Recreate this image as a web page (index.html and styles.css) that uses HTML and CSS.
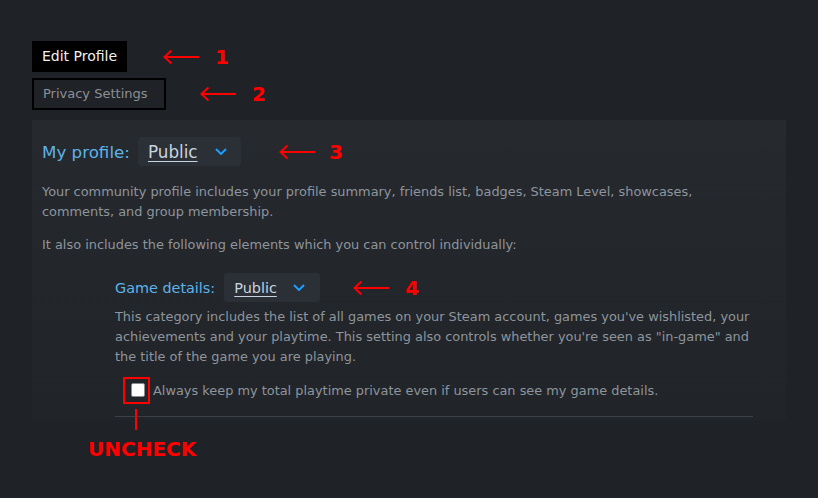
FILE: index.html
```html
<!DOCTYPE html>
<html lang="en">
<head>
<meta charset="utf-8">
<title>Privacy Settings</title>
<link rel="stylesheet" href="styles.css">
</head>
<body>
<div class="page">
  <div class="nav-row">
    <div class="tab tab-active">Edit Profile</div>
    <div class="annot annot-1">
      <svg class="arrow" width="36" height="16" viewBox="0 0 36 16"><path d="M1.5 8 H36 M8.5 1.5 L1.5 8 L8.5 14.5" fill="none" stroke="#ff0000" stroke-width="2"/></svg>
      <span class="num">1</span>
    </div>
  </div>
  <div class="nav-row nav-row-2">
    <div class="tab tab-outline">Privacy Settings</div>
    <div class="annot annot-2">
      <svg class="arrow" width="36" height="16" viewBox="0 0 36 16"><path d="M1.5 8 H36 M8.5 1.5 L1.5 8 L8.5 14.5" fill="none" stroke="#ff0000" stroke-width="2"/></svg>
      <span class="num">2</span>
    </div>
  </div>

  <div class="panel">
    <div class="setting-row">
      <span class="label label-lg">My profile:</span>
      <div class="dropdown dropdown-lg">
        <span class="dd-value">Public</span>
        <svg class="chev" width="12" height="7" viewBox="0 0 12 7"><path d="M1 1 L6 6 L11 1" fill="none" stroke="#1a9fff" stroke-width="2"/></svg>
      </div>
      <div class="annot annot-3">
        <svg class="arrow" width="36" height="16" viewBox="0 0 36 16"><path d="M1.5 8 H36 M8.5 1.5 L1.5 8 L8.5 14.5" fill="none" stroke="#ff0000" stroke-width="2"/></svg>
        <span class="num num-3">3</span>
      </div>
    </div>
    <p class="desc desc-1">Your community profile includes your profile summary, friends list, badges, Steam Level, showcases, comments, and group membership.</p>
    <p class="desc desc-2">It also includes the following elements which you can control individually:</p>

    <div class="sub">
      <div class="setting-row">
        <span class="label label-sm">Game details:</span>
        <div class="dropdown dropdown-sm">
          <span class="dd-value dd-value-sm">Public</span>
          <svg class="chev" width="12" height="7" viewBox="0 0 12 7"><path d="M1 1 L6 6 L11 1" fill="none" stroke="#1a9fff" stroke-width="2"/></svg>
        </div>
        <div class="annot annot-4">
          <svg class="arrow" width="36" height="16" viewBox="0 0 36 16"><path d="M1.5 8 H36 M8.5 1.5 L1.5 8 L8.5 14.5" fill="none" stroke="#ff0000" stroke-width="2"/></svg>
          <span class="num">4</span>
        </div>
      </div>
      <p class="desc desc-3">This category includes the list of all games on your Steam account, games you've wishlisted, your achievements and your playtime. This setting also controls whether you're seen as "in-game" and the title of the game you are playing.</p>
      <div class="check-row">
        <div class="highlight">
          <span class="checkbox"></span>
          <span class="pointer-line"></span>
          <span class="pointer-text">UNCHECK</span>
        </div>
        <span class="check-label">Always keep my total playtime private even if users can see my game details.</span>
      </div>
    </div>
  </div>
</div>
</body>
</html>
```

FILE: styles.css
```css
html, body {
  margin: 0;
  padding: 0;
}
body {
  background: #1f2226;
  font-family: "DejaVu Sans", "Liberation Sans", sans-serif;
  width: 818px;
  height: 498px;
  overflow: hidden;
}
.page {
  padding: 41px 32px 0 32px;
}
.nav-row {
  display: flex;
  align-items: center;
}
.nav-row-2 {
  margin-top: 6px;
}
.tab {
  box-sizing: border-box;
  white-space: nowrap;
}
.tab-active {
  background: #000000;
  color: #f0f0f0;
  font-size: 14px;
  line-height: 17px;
  height: 31px;
  padding: 7px 0 0 10px;
  width: 95px;
}
.tab-outline {
  border: 2px solid #000000;
  color: #8c9096;
  font-size: 13px;
  line-height: 16px;
  height: 32px;
  padding: 6px 9px 0 9px;
  width: 134px;
}
.annot {
  display: flex;
  align-items: center;
}
.annot-1 { margin-left: 36px; }
.annot-2 { margin-left: 34px; }
.annot-3 { margin-left: 38px; }
.annot-4 { margin-left: 33px; }
.arrow {
  display: block;
}
.num {
  color: #ff0000;
  font-weight: bold;
  font-size: 20px;
  line-height: 20px;
  margin-left: 16px;
}
.num-3 {
  margin-left: 14px;
}
.panel {
  margin-top: 10px;
  width: 754px;
  box-sizing: border-box;
  height: 300px;
  padding: 17px 24px 0 10px;
  background: linear-gradient(180deg, #262a2f 0%, #23262b 50%, #212428 100%);
}
.setting-row {
  display: flex;
  align-items: center;
  height: 29px;
}
.label {
  color: #5eb2ea;
}
.label-lg {
  font-size: 16.7px;
  margin-right: 8px;
}
.label-sm {
  font-size: 14.4px;
  margin-right: 9px;
}
.dropdown {
  box-sizing: border-box;
  height: 29px;
  display: flex;
  align-items: center;
  background: #2b2f36;
  border-radius: 3px;
}
.dropdown-lg {
  width: 103px;
  padding-left: 10px;
}
.dropdown-sm {
  width: 96px;
  padding-left: 10px;
}
.dd-value {
  color: #c7d3de;
  font-size: 16.8px;
  text-decoration: underline;
  text-decoration-thickness: 1px;
  text-underline-offset: 3px;
  margin-right: 17px;
}
.dd-value-sm {
  font-size: 14.4px;
  margin-right: 16px;
}
.chev {
  display: block;
}
.desc {
  margin: 0;
  color: #8e959d;
  font-size: 12.9px;
  line-height: 20px;
}
.desc-1 {
  margin-top: 16px;
}
.desc-2 {
  margin-top: 13px;
}
.sub {
  margin: 18px 9px 0 73px;
  border-bottom: 1px solid #3b4049;
  padding-bottom: 12px;
}
.desc-3 {
  margin-top: 5px;
  margin-right: -4px;
}
.check-row {
  display: flex;
  align-items: center;
  margin-top: 10px;
  margin-left: 8px;
}
.highlight {
  position: relative;
  box-sizing: border-box;
  width: 27px;
  height: 27px;
  border: 2px solid #ff0000;
  padding: 4px 0 0 6px;
}
.checkbox {
  display: block;
  box-sizing: border-box;
  width: 14px;
  height: 14px;
  background: #ffffff;
  border: 1px solid #8a8a8a;
  border-radius: 2px;
}
.pointer-line {
  position: absolute;
  left: 10px;
  top: 30px;
  width: 2px;
  height: 21px;
  background: #ff0000;
}
.pointer-text {
  position: absolute;
  left: -37px;
  top: 60px;
  color: #ff0000;
  font-weight: bold;
  font-size: 20px;
  line-height: 20px;
  white-space: nowrap;
}
.check-label {
  margin-left: 3px;
  color: #8e959d;
  font-size: 12.9px;
  line-height: 20px;
  white-space: nowrap;
}
```
